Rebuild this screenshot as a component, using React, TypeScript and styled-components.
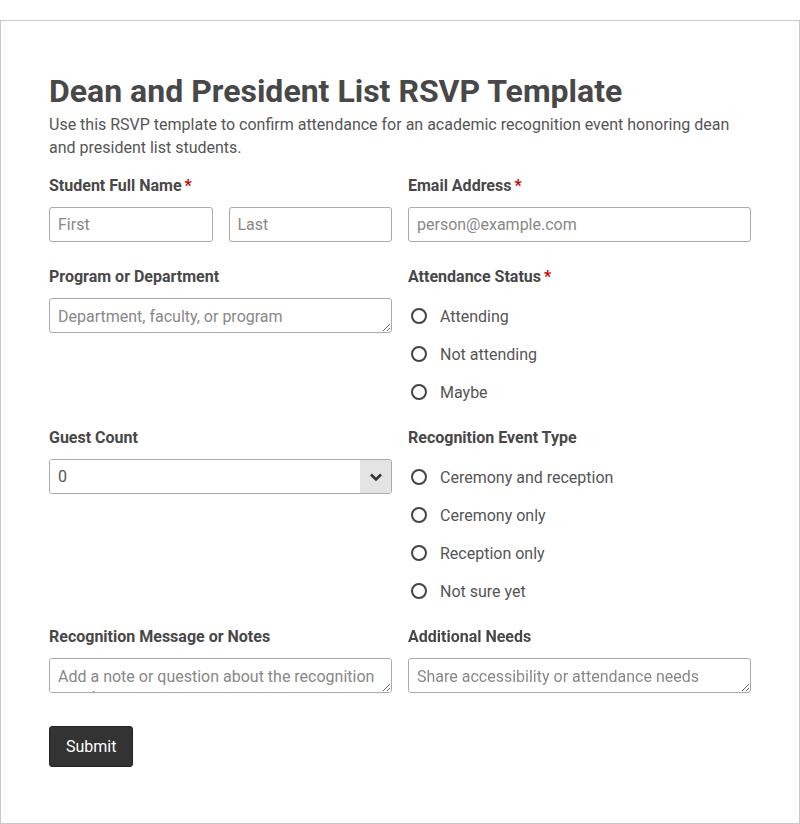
import React from 'react';
import styled, { createGlobalStyle } from 'styled-components';

const GlobalStyle = createGlobalStyle`
  html, body {
    margin : 0;
    padding : 0;
    background : #fff;
  }
  body {
    font-family : Roboto, "Liberation Sans", Arial, sans-serif;
    color : #4a4a4a;
  }
  * { box-sizing : border-box; }
`

const Card = styled.form`
  margin-top : 20px;
  width : 800px;
  height : 804px;
  border : 1px solid #c8c8c8;
  padding : 51px 48px 56px;
`

const Title = styled.h1`
  margin : 0;
  font-size : 32px;
  line-height : 38px;
  font-weight : 700;
  color : #484848;
`

const Lead = styled.p`
  margin : 3px 0 17px;
  font-size : 16px;
  line-height : 23px;
  color : #555;
`

const Grid = styled.div`
  display : grid;
  grid-template-columns : 1fr 1fr;
  column-gap : 16px;
  row-gap : 25px;
  align-items : start;
`

const Field = styled.div`
  display : flex;
  flex-direction : column;
`

const Label = styled.div`
  font-size : 16px;
  line-height : 20px;
  font-weight : 700;
  color : #484848;
  margin-bottom : 11px;
`

const Req = styled.span`
  color : #c00;
  margin-left : 3px;
`

const Pair = styled.div`
  display : grid;
  grid-template-columns : 1fr 1fr;
  gap : 16px;
`

const inputBase = `
  width : 100%;
  height : 35px;
  border : 1px solid #aaa;
  border-radius : 3px;
  padding : 0 8px;
  font-family : Roboto, "Liberation Sans", Arial, sans-serif;
  font-size : 16px;
  color : #555;
  background : #fff;
  &::placeholder { color : #888; }
`

const Input = styled.input`
  ${inputBase}
`

const TextArea = styled.textarea`
  ${inputBase}
  display : block;
  padding : 8px 8px 4px;
  line-height : 20px;
  resize : vertical;
`

const SelectWrap = styled.div`
  display : flex;
  height : 35px;
  border : 1px solid #aaa;
  border-radius : 3px;
  overflow : hidden;
`

const Select = styled.select`
  flex : 1;
  border : none;
  appearance : none;
  background : #fff;
  padding : 0 8px;
  font-family : Roboto, "Liberation Sans", Arial, sans-serif;
  font-size : 16px;
  color : #555;
  outline : none;
`

const Arrow = styled.div`
  width : 31px;
  background : #e4e4e4;
  display : flex;
  align-items : center;
  justify-content : center;
`

const RadioList = styled.div`
  display : flex;
  flex-direction : column;
  gap : 16px;
  padding-top : 7px;
`

const RadioRow = styled.label`
  display : flex;
  align-items : center;
  height : 22px;
  font-size : 16px;
  color : #555;
`

const Radio = styled.input`
  appearance : none;
  margin : 0 13px 0 3px;
  width : 16px;
  height : 16px;
  border : 2px solid #444;
  border-radius : 50%;
  background : #fff;
`

const Submit = styled.button`
  margin-top : 33px;
  height : 41px;
  padding : 0 16px;
  background : #333;
  color : #fff;
  border : 1px solid #222;
  border-radius : 3px;
  font-family : Roboto, "Liberation Sans", Arial, sans-serif;
  font-size : 16px;
`

const RadioGroup = ({name, options} : {name : string, options : string[]}) => (
  <RadioList>
    {options.map((o) => (
      <RadioRow key={o}>
        <Radio type="radio" name={name} />
        {o}
      </RadioRow>
    ))}
  </RadioList>
)

const App = () => {
  return (
    <>
      <GlobalStyle />
      <Card onSubmit={(e) => e.preventDefault()}>
        <Title>Dean and President List RSVP Template</Title>
        <Lead>
          Use this RSVP template to confirm attendance for an academic recognition event honoring dean and president list students.
        </Lead>
        <Grid>
          <Field>
            <Label>Student Full Name<Req>*</Req></Label>
            <Pair>
              <Input placeholder="First" />
              <Input placeholder="Last" />
            </Pair>
          </Field>
          <Field>
            <Label>Email Address<Req>*</Req></Label>
            <Input placeholder="person@example.com" />
          </Field>

          <Field>
            <Label>Program or Department</Label>
            <TextArea rows={1} placeholder="Department, faculty, or program" />
          </Field>
          <Field>
            <Label>Attendance Status<Req>*</Req></Label>
            <RadioGroup name="attendance" options={['Attending', 'Not attending', 'Maybe']} />
          </Field>

          <Field>
            <Label>Guest Count</Label>
            <SelectWrap>
              <Select defaultValue="0">
                {[0, 1, 2, 3, 4].map((n) => <option key={n} value={n}>{n}</option>)}
              </Select>
              <Arrow>
                <svg width="14" height="10" viewBox="0 0 14 10">
                  <path d="M2 2.5 L7 7.5 L12 2.5" fill="none" stroke="#333" strokeWidth="2.6" />
                </svg>
              </Arrow>
            </SelectWrap>
          </Field>
          <Field>
            <Label>Recognition Event Type</Label>
            <RadioGroup name="event" options={['Ceremony and reception', 'Ceremony only', 'Reception only', 'Not sure yet']} />
          </Field>

          <Field>
            <Label>Recognition Message or Notes</Label>
            <TextArea rows={1} placeholder="Add a note or question about the recognition event" />
          </Field>
          <Field>
            <Label>Additional Needs</Label>
            <TextArea rows={1} placeholder="Share accessibility or attendance needs" />
          </Field>
        </Grid>
        <Submit type="submit">Submit</Submit>
      </Card>
    </>
  )
}

export default App;
